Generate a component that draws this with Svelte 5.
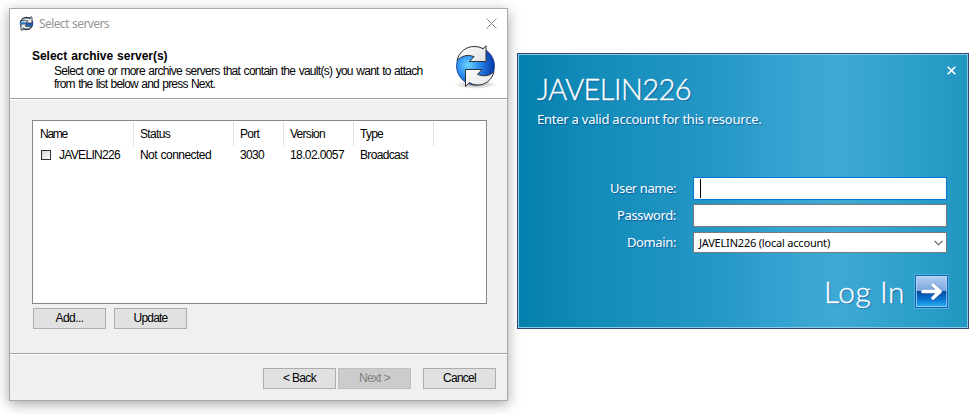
<script>
  const columns = [
    { title: 'Name', width: 101, tw: 27, value: 'JAVELIN226', vw: 61 },
    { title: 'Status', width: 100, tw: 30, value: 'Not connected', vw: 71 },
    { title: 'Port', width: 50, tw: 19, value: '3030', vw: 24 },
    { title: 'Version', width: 70, tw: 35, value: '18.02.0057', vw: 54 },
    { title: 'Type', width: 80, tw: 23, value: 'Broadcast', vw: 48 }
  ];

  // Spreads the tracking of a text run so that it takes the given width.
  function fit(node, width) {
    const natural = node.getBoundingClientRect().width;
    node.style.letterSpacing = `${(width - natural) / node.textContent.length}px`;
  }
</script>

{#snippet text(value, width)}<span class="run" use:fit={width}>{value}</span>{/snippet}

<main>
  <section class="wizard">
    <header>
      <div class="titlebar">
        <svg class="small" width="15" height="15" viewBox="0 0 15 15">
          <circle cx="7.5" cy="7.5" r="6.2" fill="#d9e3ea" stroke="#263342" stroke-width="1.2" />
          <path d="M1 8c0-2 2-3 5-2l2 1-1 2-4 3C2 11 1 10 1 8Z" fill="#4c9be3" />
          <path d="M8 6c2-1 4-2 6 0v3c-1 2-4 2-6 1l-2-1Z" fill="#1f61ba" />
          <path d="M2 5c2-3 5-4 9-2V1h2v6H7l2-2C6 4 4 4 2 5Z" fill="#e8eaec" stroke="#263342" stroke-width=".8" />
          <path d="M13 10c-2 3-5 4-9 2v2H2V8h6l-2 2c3 1 5 1 7 0Z" fill="#e8eaec" stroke="#263342" stroke-width=".8" />
        </svg>
        <span class="caption">{@render text('Select servers', 70)}</span>
        <svg class="close" width="11" height="11" viewBox="0 0 11 11"><path d="M.5.5l10 10m0-10l-10 10" stroke="#8c8c8c" /></svg>
      </div>
      <div class="intro">
        <div class="copy">
          <b>{@render text('Select archive server(s)', 135.5)}</b>
          <p>{@render text('Select one or more archive servers that contain the vault(s) you want to attach', 368.5)}</p>
          <p>{@render text('from the list below and press Next.', 161)}</p>
        </div>
        <svg class="sync" width="44" height="45" viewBox="0 0 44 45">
          <defs>
            <radialGradient id="ball" cx="30%" cy="48%" r="66%">
              <stop offset="0" stop-color="#6fd2ff" />
              <stop offset=".45" stop-color="#2b8ef0" />
              <stop offset="1" stop-color="#0b3fae" />
            </radialGradient>
            <radialGradient id="shade">
              <stop offset="0" stop-color="#444" stop-opacity=".6" />
              <stop offset="1" stop-color="#999" stop-opacity="0" />
            </radialGradient>
            <linearGradient id="metal" x1="0" y1="0" x2="1" y2="1">
              <stop offset="0" stop-color="#fff" />
              <stop offset="1" stop-color="#e2e2e2" />
            </linearGradient>
          </defs>
          <ellipse cx="21.5" cy="39.5" rx="22" ry="4.5" fill="url(#shade)" />
          <circle cx="21.5" cy="21" r="19" fill="url(#ball)" stroke="#143a86" stroke-width=".8" />
          <path d="M3 15.500C5 7 12 1.500 20 1.500c4 0 7 1 9 2.500L32 .7V16.500H15.500L20 11.700C14 9 7 11 3 15.500Z" fill="url(#metal)" stroke="#2e3338" stroke-width="1" />
          <path d="M40 26.500C38 35 31.500 40 24 40c-4 0-6.500-1-8.500-2.500L11.500 41.500V24.500H28L23.500 29.300C29.500 32 36 31 40 26.500Z" fill="url(#metal)" stroke="#2e3338" stroke-width="1" />
        </svg>
      </div>
    </header>
    <div class="body">
      <div class="list">
        <div class="row head">
          {#each columns as c}<div class="cell" style:width="{c.width}px">{@render text(c.title, c.tw)}</div>{/each}
        </div>
        <div class="row">
          {#each columns as c, i}
            <div class="cell" style:width="{c.width}px">{#if i === 0}<i class="check"></i>{/if}{@render text(c.value, c.vw)}</div>
          {/each}
        </div>
      </div>
      <div class="actions">
        <button>{@render text('Add...', 28)}</button>
        <button>{@render text('Update', 34)}</button>
      </div>
    </div>
    <footer>
      <button>{@render text('< Back', 33)}</button>
      <button class="disabled">{@render text('Next >', 31)}</button>
      <button class="cancel">{@render text('Cancel', 33)}</button>
    </footer>
  </section>

  <section class="login">
    <svg class="dismiss" width="9" height="9" viewBox="0 0 9 9"><path d="M.7.7l7.600 7.600m0-7.600l-7.600 7.600" stroke="#fff" stroke-width="1.600" /></svg>
    <h1>{@render text('JAVELIN226', 154)}</h1>
    <p class="hint">{@render text('Enter a valid account for this resource.', 224.5)}</p>
    <div class="form">
      <div class="field"><label for="user">{@render text('User name:', 66)}</label><div id="user" class="box active"><i class="caret"></i></div></div>
      <div class="field"><label for="pass">{@render text('Password:', 59)}</label><div id="pass" class="box"></div></div>
      <div class="field"><label for="domain">{@render text('Domain:', 49)}</label>
        <div id="domain" class="box select">
          {@render text('JAVELIN226 (local account)', 131)}
          <svg width="9" height="6" viewBox="0 0 9 6"><path d="M.5.8l4 4 4-4" fill="none" stroke="#555" stroke-width="1.1" /></svg>
        </div>
      </div>
    </div>
    <div class="submit">
      <span class="go">{@render text('Log In', 81)}</span>
      <svg width="35" height="35" viewBox="0 0 35 35">
        <defs>
          <linearGradient id="top" x1="0" y1="0" x2="0" y2="1"><stop offset="0" stop-color="#b4cff1" /><stop offset="1" stop-color="#79a5df" /></linearGradient>
          <linearGradient id="bottom" x1="0" y1="0" x2="0" y2="1"><stop offset="0" stop-color="#06479c" /><stop offset=".5" stop-color="#0874cf" /><stop offset="1" stop-color="#2bb0f4" /></linearGradient>
        </defs>
        <rect x=".5" y=".5" width="34" height="34" fill="none" stroke="#51b1d2" />
        <rect x="1" y="1" width="33" height="33" fill="#1263b8" />
        <rect x="2" y="2" width="31" height="15" fill="url(#top)" />
        <rect x="2" y="17" width="31" height="16" fill="url(#bottom)" />
        <rect x="2.5" y="2.5" width="30" height="30" fill="none" stroke="#b9e4ff" stroke-opacity=".65" />
        <path d="M9 18h16M19 11l7 7-7 7" fill="none" stroke="#25579a" stroke-width="4.6" stroke-linecap="round" stroke-linejoin="round" opacity=".55" />
        <path d="M9 17.5h16M19 11l7 6.5-7 6.500" fill="none" stroke="#fff" stroke-width="3.700" stroke-linecap="round" stroke-linejoin="round" />
      </svg>
    </div>
  </section>
</main>

<style>
  :global(body) { margin: 0; background: #fff; }
  * { box-sizing: border-box; }
  main { width: 976px; height: 414px; overflow: hidden; padding: 8px 0 0 9px; display: flex; gap: 9px; align-items: flex-start; font: 12px/13px "Liberation Sans", Arial, sans-serif; word-spacing: .8px; color: #000; }
  .run { display: inline-block; white-space: pre; flex: none; }
  p, h1 { margin: 0; }
  svg { display: block; flex: none; }

  .wizard { width: 499px; height: 393px; border: 1px solid #a8a8a8; background: #f0f0f0; box-shadow: 0 3px 12px rgba(0,0,0,.36); display: flex; flex-direction: column; flex: none; }
  header { height: 91px; background: #fff; border-bottom: 1px solid #fff; }
  .titlebar { display: flex; height: 29px; align-items: center; padding: 0 10px 0 9px; }
  .caption { margin-left: 5px; flex: 1; font: 12px/16px "Noto Sans", sans-serif; color: #969696; }
  .intro { height: 61px; display: flex; justify-content: space-between; padding: 12px 9px 0 22px; border-bottom: 1px solid #a0a0a0; }
  .copy b { display: block; height: 15px; }
  .copy p { height: 13px; padding-left: 22px; }
  .sync { margin-top: -5px; }
  .body { height: 253px; padding: 20px 20px 0 22px; }
  .list { height: 184px; width: 455px; background: #fff; border: 1px solid #828790; padding-top: 1px; }
  .row { display: flex; height: 24px; }
  .cell { display: flex; align-items: center; padding-left: 6px; flex: none; }
  .cell:first-child { padding-left: 7px; }
  .head .cell { border-right: 1px solid #e2e2e2; }
  .row:not(.head) { height: 18px; }
  .check { width: 10px; height: 10px; border: 1px solid #333; background: linear-gradient(135deg, #d4d4d4, #fff); margin: -1px 8px 0 1px; flex: none; }
  .actions { display: flex; gap: 8px; padding: 4px 0 0 1px; }
  button { appearance: none; width: 73px; height: 21px; border: 1px solid #adadad; border-radius: 0; background: #e1e1e1; padding: 0; color: #000; font: inherit; display: flex; align-items: center; justify-content: center; }
  footer { flex: 1; border-top: 1px solid #a0a0a0; box-shadow: inset 0 1px #fff; display: flex; justify-content: flex-end; gap: 2px; padding: 14px 11px 0 0; }
  .disabled { background: #ccc; border-color: #bfbfbf; color: #838383; }
  .cancel { margin-left: 10px; }

  .login { position: relative; width: 452px; height: 276px; margin-top: 45px; border: 1px solid #2d4a70; box-shadow: inset 0 0 0 1px #88cbe5; background: linear-gradient(90deg, #0480ae 0, #138cb9 17%, #2497c5 43%, #35a3d1 59%, #3fa9d5 71%, #2c9fcb 88%, #2196c1 100%); color: #fff; font-family: "Noto Sans", "Open Sans", sans-serif; word-spacing: 0; text-shadow: 1px 1px 1px rgba(0,65,145,.65); padding: 19px 21px 0 19px; }
  .dismiss { position: absolute; right: 12px; top: 12px; }
  h1 { font-family: Lato, "Noto Sans", sans-serif; font-size: 29px; line-height: 32px; font-weight: 300; height: 36px; -webkit-text-stroke: .35px #fff; }
  .hint { font-size: 13px; line-height: 20px; height: 20px; }
  .form { padding-top: 48px; }
  .field { display: flex; height: 27px; justify-content: flex-end; }
  label { font-size: 13px; line-height: 23px; margin-right: 17px; }
  .box { width: 254px; height: 23px; background: #fff; border: 1px solid #7a7a7a; }
  .active { border-color: #0078d7; }
  .caret { display: block; width: 1px; height: 19px; margin: 1px 0 0 6px; background: #000; }
  .select { height: 21px; margin-top: 1px; display: flex; align-items: center; justify-content: space-between; padding: 0 3px 0 5px; color: #000; text-shadow: none; font-size: 11px; }
  .submit { display: flex; justify-content: flex-end; align-items: center; padding-top: 16px; margin-right: -2px; gap: 9px; }
  .go { font-family: Lato, "Noto Sans", sans-serif; font-size: 30px; font-weight: 300; line-height: 35px; -webkit-text-stroke: .35px #fff; }
</style>
